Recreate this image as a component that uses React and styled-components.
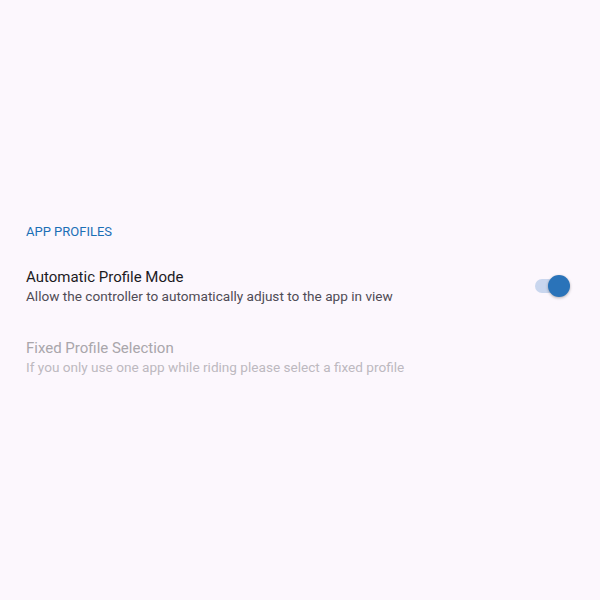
import React, { useState } from "react";
import styled, { createGlobalStyle } from "styled-components";

const GlobalStyle = createGlobalStyle`
  html, body {
    margin: 0;
    padding: 0;
    background: #fcf7fd;
  }
  body {
    font-family: Roboto, "Noto Sans", sans-serif;
  }
`;

const Screen = styled.div`
  width: 600px;
  height: 600px;
  box-sizing: border-box;
  padding-top: 224px;
  background: #fcf7fd;
`;

const Category = styled.div`
  padding: 0 26px;
  font-size: 13px;
  color: #1b6fb6;
  line-height: 16px;
  margin-bottom: 27px;
`;

const Row = styled.div`
  display: flex;
  align-items: center;
  padding: 0 35px 0 26px;
  margin-bottom: 33px;
`;

const Texts = styled.div`
  flex: 1;
  display: flex;
  flex-direction: column;
`;

const Title = styled.div`
  font-size: 15px;
  line-height: 20px;
  color: ${(p) => (p.disabled ? "#a9a6ab" : "#1c1b1f")};
`;

const Summary = styled.div`
  font-size: 13.6px;
  line-height: 18px;
  color: ${(p) => (p.disabled ? "#bdb9c0" : "#4f4b55")};
`;

const Track = styled.button`
  position: relative;
  width: 30px;
  height: 14px;
  border: none;
  padding: 0;
  border-radius: 7px;
  background: ${(p) => (p.on ? "#c9d6ee" : "#c7c4cb")};
  cursor: pointer;
`;

const Thumb = styled.span`
  position: absolute;
  top: -4px;
  left: ${(p) => (p.on ? "13px" : "-5px")};
  width: 22px;
  height: 22px;
  border-radius: 50%;
  background: ${(p) => (p.on ? "#2a73b9" : "#f2f0f4")};
  box-shadow: 0 1px 3px rgba(0, 0, 0, 0.3);
  transition: left 0.2s;
`;

function App() {
  const [auto, setAuto] = useState(true);
  return (
    <Screen>
      <GlobalStyle />
      <Category>APP PROFILES</Category>
      <Row>
        <Texts>
          <Title>Automatic Profile Mode</Title>
          <Summary>Allow the controller to automatically adjust to the app in view</Summary>
        </Texts>
        <Track on={auto} onClick={() => setAuto(!auto)}>
          <Thumb on={auto} />
        </Track>
      </Row>
      <Row>
        <Texts>
          <Title disabled>Fixed Profile Selection</Title>
          <Summary disabled>If you only use one app while riding please select a fixed profile</Summary>
        </Texts>
      </Row>
    </Screen>
  );
}

export default App;
